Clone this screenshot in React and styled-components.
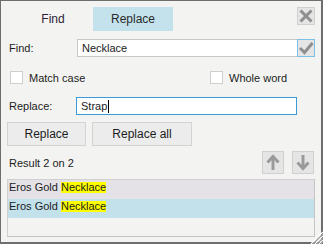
import React from "react";
import styled, { createGlobalStyle } from "styled-components";

const GlobalStyle = createGlobalStyle`
  html, body {
    margin: 0;
    padding: 0;
    background: #f3f4f2;
  }
  * {
    box-sizing: border-box;
  }
`;

const Frame = styled.div`
  position: relative;
  width: 323px;
  height: 244px;
  display: flex;
  flex-direction: column;
  padding: 6px 6px 5px 6px;
  background: #f3f4f2;
  border-style: solid;
  border-color: #6e6e6e;
  border-width: 1px 2px 2px 1px;
  font-family: "Liberation Sans", Arial, sans-serif;
  font-size: 11px;
  color: #1c1c1c;
`;

const Header = styled.div`
  display: flex;
  justify-content: space-between;
  align-items: flex-start;
  height: 24px;
`;

const TabBar = styled.div`
  display: flex;
  padding-left: 6px;
`;

const Tab = styled.div`
  width: 80px;
  height: 24px;
  display: flex;
  align-items: center;
  justify-content: center;
  font-size: 12px;
  color: ${(p) => (p.$active ? "#2a2a2a" : "#2e1d38")};
  background: ${(p) => (p.$active ? "#c4e2ec" : "transparent")};
`;

const IconButton = styled.div`
  width: ${(p) => p.$w || 18}px;
  height: ${(p) => p.$h || 18}px;
  display: flex;
  align-items: center;
  justify-content: center;
  background: #e5e5e5;
  border: 1px solid ${(p) => (p.$focus ? "#7dbfe6" : "#d0d0d0")};
`;

const FieldRow = styled.div`
  display: flex;
  align-items: center;
  height: 18px;
  margin-top: ${(p) => p.$top}px;
  padding-right: ${(p) => p.$right || 0}px;
`;

const Label = styled.div`
  width: ${(p) => p.$w}px;
  padding-left: 2px;
`;

const Field = styled.div`
  flex: 1;
  height: 18px;
  display: flex;
  align-items: center;
  background: #ffffff;
  border: 1px solid ${(p) => (p.$focus ? "#3d9ad8" : "#c9c9c9")};
  padding-left: 4px;
`;

const FieldEnd = styled.div`
  margin: -1px -1px -1px auto;
`;

const Caret = styled.span`
  display: inline-block;
  width: 1px;
  height: 13px;
  margin-left: 1px;
  background: #000;
`;

const OptionsRow = styled.div`
  display: grid;
  grid-template-columns: 200px auto;
  margin: 14px 0 0 3px;
  height: 13px;
`;

const Option = styled.label`
  display: flex;
  align-items: center;
  gap: 6px;
`;

const Box = styled.span`
  width: 13px;
  height: 13px;
  background: #ffffff;
  border: 1px solid #cfcfcf;
`;

const ButtonRow = styled.div`
  display: flex;
  gap: 6px;
  margin-top: 7px;
`;

const Button = styled.button`
  width: ${(p) => p.$w}px;
  height: 24px;
  padding: 0;
  font-family: inherit;
  font-size: 12px;
  color: #1c1c1c;
  background: #ececec;
  border: 1px solid #d3d3d3;
`;

const ResultRow = styled.div`
  display: flex;
  align-items: center;
  height: 23px;
  margin-top: 5px;
  padding: 0 1px 0 2px;
`;

const Spacer = styled.div`
  flex: 1;
`;

const NavGroup = styled.div`
  display: flex;
  gap: 8px;
`;

const List = styled.div`
  flex: 1;
  margin-top: 5px;
  background: #f3f4f2;
  border: 1px solid #d0d0d0;
  border-right-color: #c4c4c4;
  border-bottom-color: #c4c4c4;
`;

const Row = styled.div`
  height: 19px;
  padding: 2px 0 0 1px;
  line-height: 11px;
  background: ${(p) => (p.$selected ? "#c3e1eb" : "#e4e2e6")};
`;

const Mark = styled.span`
  display: inline-block;
  line-height: 11px;
  background: #ffff00;
`;

const Grip = styled.svg`
  position: absolute;
  right: -2px;
  bottom: -2px;
`;

const gray = "#8e8e8e";

const CloseIcon = () => (
  <svg width="14" height="14" viewBox="0 0 14 14">
    <path d="M1.5 1.5 L12.5 12.5 M12.5 1.5 L1.5 12.5" stroke={gray} strokeWidth="3" />
  </svg>
);

const CheckIcon = () => (
  <svg width="16" height="16" viewBox="0 0 16 16">
    <polyline points="2,8 6.5,12.5 14.5,3" fill="none" stroke={gray} strokeWidth="3" />
  </svg>
);

const ArrowIcon = ({ down }) => (
  <svg width="16" height="17" viewBox="0 0 16 17" style={{ transform: down ? "rotate(180deg)" : "none" }}>
    <path d="M8 3 L8 16" stroke="#9a9a9a" strokeWidth="3" />
    <polyline points="2.5,8.5 8,2.5 13.5,8.5" fill="none" stroke="#9a9a9a" strokeWidth="3" />
  </svg>
);

const results = ["Eros Gold ", "Eros Gold "];

export default function App() {
  return (
    <>
      <GlobalStyle />
      <Frame>
        <Header>
          <TabBar>
            <Tab>Find</Tab>
            <Tab $active>Replace</Tab>
          </TabBar>
          <IconButton>
            <CloseIcon />
          </IconButton>
        </Header>

        <FieldRow $top={8}>
          <Label $w={70}>Find:</Label>
          <Field>
            Necklace
            <FieldEnd>
              <IconButton $focus>
                <CheckIcon />
              </IconButton>
            </FieldEnd>
          </Field>
        </FieldRow>

        <OptionsRow>
          <Option>
            <Box />
            Match case
          </Option>
          <Option>
            <Box />
            Whole word
          </Option>
        </OptionsRow>

        <FieldRow $top={13} $right={18}>
          <Label $w={69}>Replace:</Label>
          <Field $focus>
            Strap
            <Caret />
          </Field>
        </FieldRow>

        <ButtonRow>
          <Button $w={79}>Replace</Button>
          <Button $w={100}>Replace all</Button>
        </ButtonRow>

        <ResultRow>
          Result 2 on 2
          <Spacer />
          <NavGroup>
            <IconButton $w={22} $h={23}>
              <ArrowIcon />
            </IconButton>
            <IconButton $w={22} $h={23}>
              <ArrowIcon down />
            </IconButton>
          </NavGroup>
        </ResultRow>

        <List>
          {results.map((r, i) => (
            <Row key={i} $selected={i === 1}>
              {r}
              <Mark>Necklace</Mark>
            </Row>
          ))}
        </List>

        <Grip width="13" height="13" viewBox="0 0 13 13">
          <path d="M13 1 L1 13 M13 5 L5 13 M13 9 L9 13" stroke="#ffffff" strokeWidth="1.2" />
          <path d="M13 3 L3 13 M13 7 L7 13 M13 11 L11 13" stroke="#9a9a9a" strokeWidth="1.2" />
        </Grip>
      </Frame>
    </>
  );
}
